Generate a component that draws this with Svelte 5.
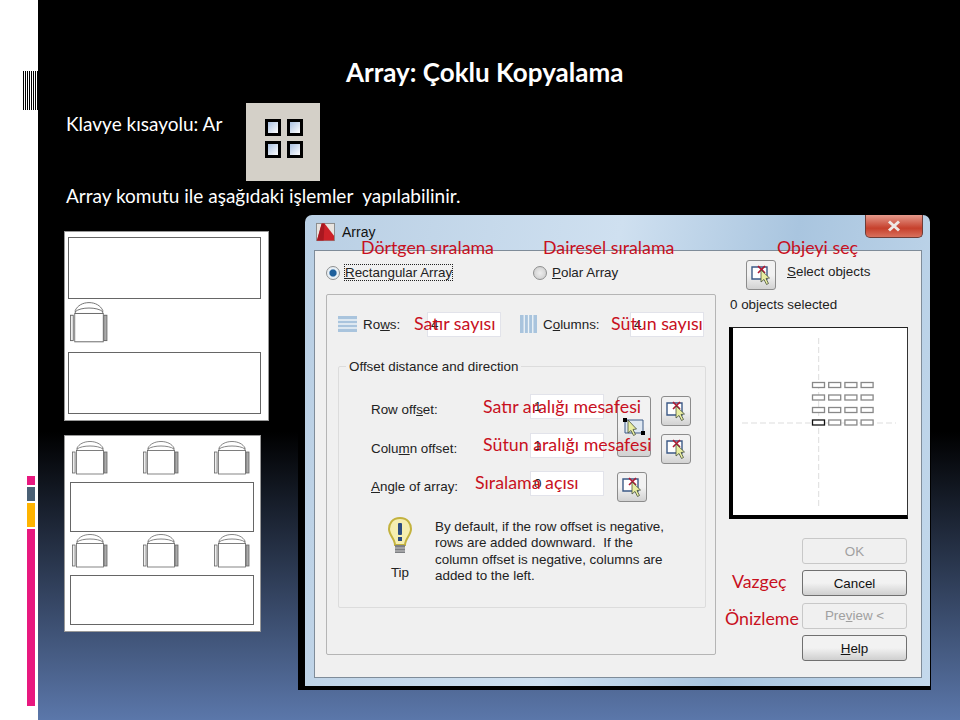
<script lang="ts">
  const barcode = [0, 2, 4, 6, 8, 10, 12, 14];
  const chairs = [0, 1, 2];
  const previewCols = [0, 1, 2, 3];
  const previewRows = [0, 1, 2, 3];

  const labels = [
    { text: 'Dörtgen sıralama', x: 63, y: 24 },
    { text: 'Dairesel sıralama', x: 245, y: 24 },
    { text: 'Objeyi seç', x: 479, y: 24 },
    { text: 'Satır sayısı', x: 116, y: 100 },
    { text: 'Sütun sayısı', x: 313, y: 100 },
    { text: 'Satır aralığı mesafesi', x: 185, y: 183 },
    { text: 'Sütun aralığı mesafesi', x: 185, y: 221 },
    { text: 'Sıralama açısı', x: 177, y: 259 },
    { text: 'Vazgeç', x: 434, y: 358 },
    { text: 'Önizleme', x: 427, y: 395 }
  ];
</script>

{#snippet chair(cls: string)}
  <svg class={cls} viewBox="0 0 36 34" preserveAspectRatio="none" aria-hidden="true">
    <g fill="#fff" stroke="#666" stroke-width="0.8">
      <path d="M5 7 C 7 3, 12 0.5, 18 0.5 C 24 0.5, 29 3, 31 7 L 31 10 L 5 10 Z" />
      <path d="M5 8 C 10 4, 26 4, 31 8" fill="none" />
      <rect x="4.5" y="9.5" width="27" height="23.5" />
      <rect x="0.5" y="11" width="2.6" height="21" fill="#eee" />
      <rect x="32" y="11" width="3" height="21" fill="#aaa" />
    </g>
  </svg>
{/snippet}

{#snippet pick()}
  <svg class="pick" viewBox="0 0 20 22" aria-hidden="true">
    <path d="M1 3 H16 V15 H1 Z" fill="#fff" stroke="#3c5a86" stroke-width="1.4" />
    <path d="M7 2 L14 9 M14 2 L7 9" stroke="#b01830" stroke-width="1.6" />
    <path d="M10 6 L10 18 L13 15.5 L15.5 20.5 L17.5 19.5 L15 14.5 L18.5 14 Z" fill="#e8eda0" stroke="#46513c" stroke-width="0.8" />
  </svg>
{/snippet}

<div class="page">
  <aside class="rail">
    <div class="barcode">
      {#each barcode as b (b)}<span></span>{/each}
    </div>
    <div class="blocks">
      <span class="pink small"></span>
      <span class="slate"></span>
      <span class="amber"></span>
      <span class="pink long"></span>
    </div>
  </aside>

  <main class="slide">
    <h1>Array: Çoklu Kopyalama</h1>

    <div class="shortcut">
      <p>Klavye kısayolu: Ar</p>
      <div class="tool">
        <span></span><span></span><span></span><span></span>
      </div>
    </div>

    <p class="intro">Array komutu ile aşağıdaki işlemler&nbsp; yapılabilinir.</p>

    <div class="content">
      <div class="plans">
        <div class="plan one">
          <div class="table"></div>
          {@render chair('seat-lg')}
          <div class="table"></div>
        </div>
        <div class="plan two">
          <div class="seats">
            {#each chairs as c (c)}{@render chair('seat')}{/each}
          </div>
          <div class="table"></div>
          <div class="seats">
            {#each chairs as c (c)}{@render chair('seat')}{/each}
          </div>
          <div class="table"></div>
        </div>
      </div>

      <div class="shot">
        <div class="window">
          <header class="titlebar">
            <svg class="cad" viewBox="0 0 20 20" aria-hidden="true">
              <rect x="0.5" y="1" width="19" height="18" fill="#e8e4e0" stroke="#8a8a8a" />
              <path d="M1 19 L6 1 L9 1 L19 14 L19 19 Z" fill="#cc2128" />
              <path d="M6 1 L9 1 L8 19 L1 19 Z" fill="#a81820" />
            </svg>
            <span>Array</span>
            <button class="close" type="button">
              <svg viewBox="0 0 16 12" aria-hidden="true"><path d="M3 1.5 L13 10.5 M13 1.5 L3 10.5" stroke="#eee8e4" stroke-width="3" /></svg>
            </button>
          </header>

          <div class="body">
            <div class="main-col">
              <div class="radios">
                <label class="radio on"><i></i><span class="focus"><u>R</u>ectangular Array</span></label>
                <label class="radio"><i></i><span><u>P</u>olar Array</span></label>
              </div>

              <section class="group">
                <div class="counts">
                  <svg class="mini" viewBox="0 0 19 18" aria-hidden="true">
                    <path d="M0 1 H19 V17 H0 Z" fill="#a9c4dd" />
                    <path d="M0 5 H19 M0 9 H19 M0 13 H19" stroke="#eef4f8" stroke-width="1.4" />
                  </svg>
                  <span class="rows-label">Ro<u>w</u>s:</span>
                  <span class="field count-a">4</span>
                  <svg class="mini" viewBox="0 0 18 19" aria-hidden="true">
                    <path d="M0 0 H18 V19 H0 Z" fill="#a9c4dd" />
                    <path d="M4.5 0 V19 M9 0 V19 M13.5 0 V19" stroke="#eef4f8" stroke-width="1.4" />
                  </svg>
                  <span class="cols-label">C<u>o</u>lumns:</span>
                  <span class="field count-b">4</span>
                </div>

                <fieldset class="offset">
                  <legend>Offset distance and direction</legend>
                  <div class="offset-grid">
                    <span class="off-label">Row off<u>s</u>et:</span>
                    <span class="field">1</span>
                    <button class="btn tall" type="button">
                      <svg viewBox="0 0 22 18" aria-hidden="true">
                        <path d="M2 2 H20 V15 H2 Z" fill="#dfe8f2" stroke="#3c5a86" />
                        <rect x="0" y="0" width="4" height="4" fill="#000" />
                        <rect x="18" y="13" width="4" height="4" fill="#000" />
                        <path d="M5 2 L5 15 L8 12.5 L10.5 17.5 L12.5 16.5 L10 11.5 L13.5 11 Z" fill="#e8eda0" stroke="#46513c" stroke-width="0.8" />
                      </svg>
                    </button>
                    <button class="btn far first" type="button">{@render pick()}</button>

                    <span class="off-label">Colu<u>m</u>n offset:</span>
                    <span class="field">1</span>
                    <button class="btn far" type="button">{@render pick()}</button>

                    <span class="off-label"><u>A</u>ngle of array:</span>
                    <span class="field">0</span>
                    <button class="btn" type="button">{@render pick()}</button>
                  </div>

                  <div class="tip">
                    <div class="tip-icon">
                      <svg viewBox="0 0 24 38" aria-hidden="true">
                        <path d="M12 1 C 4 1, 1 7, 1 12 C 1 18, 7 22, 7 28 H17 C 17 22, 23 18, 23 12 C 23 7, 20 1, 12 1 Z" fill="#f5eeb0" stroke="#c3b23e" stroke-width="2" />
                        <rect x="10" y="6" width="4" height="12" rx="1" fill="#2c4c80" />
                        <rect x="10" y="20" width="4" height="4" fill="#2c4c80" />
                        <rect x="7" y="28" width="10" height="8" fill="#7d7f82" />
                        <path d="M7 31 H17 M7 34 H17" stroke="#c8c8c8" />
                      </svg>
                      <span>Tip</span>
                    </div>
                    <p>By default, if the row offset is negative,<br />rows are added downward.&nbsp; If the<br />column offset is negative, columns are<br />added to the left.</p>
                  </div>
                </fieldset>
              </section>
            </div>

            <div class="side-col">
              <div class="select">
                <button class="btn" type="button">{@render pick()}</button>
                <span><u>S</u>elect objects</span>
              </div>
              <p class="selected">0 objects selected</p>
              <svg class="preview" viewBox="0 0 174 187" aria-hidden="true">
                <path d="M85.7 10 V178 M9 95 H163" stroke="#ddd" stroke-dasharray="6 3" fill="none" />
                {#each previewRows as r (r)}
                  {#each previewCols as c (c)}
                    <rect
                      x={79.5 + c * 16.2}
                      y={54.5 + r * 12.5}
                      width="12"
                      height="5"
                      fill="#fff"
                      stroke-width="1.3"
                      stroke={r === 3 && c === 0 ? '#111' : '#888'}
                    />
                  {/each}
                {/each}
              </svg>
              <div class="actions">
                <button class="push off" type="button">OK</button>
                <button class="push" type="button">Cancel</button>
                <button class="push off" type="button">Pre<u>v</u>iew &lt;</button>
                <button class="push" type="button"><u>H</u>elp</button>
              </div>
            </div>
          </div>
        </div>

        {#each labels as l (l.text)}
          <span class="note" style="left: {l.x}px; top: {l.y}px">{l.text}</span>
        {/each}
      </div>
    </div>
  </main>
</div>

<style>
  :global(body) {
    margin: 0;
    background: #fff;
  }

  .page {
    display: flex;
    width: 960px;
    height: 720px;
    overflow: hidden;
    font-family: Lato, 'Open Sans', sans-serif;
  }

  .rail {
    width: 38px;
    flex: none;
    padding-top: 71px;
    box-sizing: border-box;
    background: #fff;
  }

  .barcode {
    display: flex;
    justify-content: flex-end;
    gap: 1px;
    height: 39px;
  }

  .barcode span {
    width: 1px;
    background: #000;
  }

  .blocks {
    display: flex;
    flex-direction: column;
    gap: 2px;
    width: 8px;
    margin: 366px 0 0 27px;
  }

  .pink {
    background: #e8187f;
  }

  .small {
    height: 9px;
  }

  .slate {
    height: 14px;
    background: #4a6075;
  }

  .amber {
    height: 24px;
    background: #ffb400;
  }

  .long {
    height: 177px;
  }

  .slide {
    flex: 1;
    padding: 56px 0 0 28px;
    color: #fff;
    background: linear-gradient(#000 0, #000 60%, #5b77aa 100%);
  }

  h1 {
    margin: 0 0 0 280px;
    font-size: 26px;
    line-height: 32px;
    font-weight: 700;
  }

  .shortcut {
    display: flex;
    align-items: flex-start;
    margin-top: 15px;
  }

  .shortcut p,
  .intro {
    margin: 0;
    font-size: 19px;
    line-height: 22px;
  }

  .shortcut p {
    width: 180px;
    flex: none;
    margin-top: 10px;
    white-space: nowrap;
  }

  .tool {
    display: grid;
    grid-template-columns: repeat(2, 16px);
    grid-auto-rows: 17px;
    gap: 5px 6px;
    width: 74px;
    height: 78px;
    padding: 16px 0 0 19px;
    box-sizing: border-box;
    background: #d4d0c8;
  }

  .tool span {
    border: 3px solid #000;
    background: linear-gradient(135deg, #a9c0e0, #fff);
  }

  .intro {
    margin-top: 4px;
  }

  .content {
    display: flex;
    margin: 6px 0 0 -2px;
  }

  .plans {
    width: 234px;
    padding-top: 18px;
    flex: none;
  }

  .plan {
    box-sizing: border-box;
    background: #fff;
    border: 1px solid #999;
  }

  .table {
    border: 1px solid #666;
  }

  .plan.one {
    width: 205px;
    height: 190px;
    padding: 5px 7px 7px 3px;
  }

  .plan.one .table {
    height: 60px;
  }

  .seat-lg {
    display: block;
    width: 38px;
    height: 41px;
    margin: 3px 0 9px 2px;
  }

  .plan.two {
    width: 197px;
    height: 197px;
    margin-top: 14px;
    padding: 5px 6px 8px 5px;
  }

  .plan.two .table {
    height: 48px;
  }

  .seats {
    display: flex;
    justify-content: space-between;
    padding: 0 4px 0 2px;
    height: 34px;
    margin-bottom: 7px;
  }

  .plan.two .table + .seats {
    margin-top: 2px;
  }

  .seat {
    width: 36px;
    height: 34px;
  }

  .shot {
    position: relative;
    width: 633px;
    height: 477px;
    padding: 2px 1px 4px 7px;
    box-sizing: border-box;
    background: #000;
  }

  .window {
    height: 471px;
    border-radius: 7px 7px 0 0;
    background: linear-gradient(100deg, #b9cfe4, #cfe0f0 45%, #a9c5df 70%, #c4d9ec);
  }

  .titlebar {
    display: flex;
    align-items: flex-start;
    gap: 7px;
    height: 35px;
    padding-left: 11px;
    font: 14px 'Liberation Sans', sans-serif;
    color: #111;
  }

  .titlebar span {
    margin-top: 9px;
  }

  .cad {
    width: 19px;
    height: 20px;
    margin-top: 7px;
  }

  .close {
    width: 58px;
    height: 23px;
    padding: 0;
    margin-left: auto;
    margin-right: 7px;
    border: 1px solid #6d3d38;
    border-top: 0;
    border-radius: 0 0 5px 5px;
    background: linear-gradient(#e59a8c, #c6402c 60%, #d8705c);
  }

  .close svg {
    display: block;
    width: 16px;
    height: 12px;
    margin: 4px auto;
  }

  .body {
    display: flex;
    gap: 14px;
    height: 428px;
    margin: 0 8px 0 9px;
    padding-left: 11px;
    box-sizing: border-box;
    border: 1px solid #7f8c99;
    background: #f0f0f0;
    font: 13.4px 'Liberation Sans', sans-serif;
    color: #222;
  }

  .main-col {
    width: 390px;
    flex: none;
  }

  .radios {
    display: flex;
    height: 43px;
    align-items: center;
  }

  .radio {
    display: flex;
    align-items: center;
    gap: 5px;
  }

  .radio.on {
    width: 207px;
  }

  .radio i {
    width: 12px;
    height: 12px;
    border: 1px solid #8e8f8f;
    border-radius: 50%;
    background: radial-gradient(#eee, #c8c8c8);
  }

  .radio.on i {
    background: radial-gradient(#1d5f9c 0 35%, #e8f0f6 50%);
  }

  .focus {
    outline: 1px dotted #222;
  }

  .group {
    box-sizing: border-box;
    height: 361px;
    padding: 16px 9px 0 11px;
    border: 1px solid #b5b5b5;
    border-radius: 2px;
  }

  .counts {
    display: flex;
    align-items: center;
    height: 26px;
    margin-bottom: 22px;
  }

  .mini {
    width: 19px;
    height: 18px;
    flex: none;
  }

  .rows-label {
    margin-left: 6px;
    width: 64px;
  }

  .cols-label {
    margin-left: 5px;
    width: 87px;
  }

  .field {
    display: block;
    box-sizing: border-box;
    height: 25px;
    line-height: 23px;
    padding-left: 3px;
    background: #fff;
    border: 1px solid #e2e3ea;
  }

  .count-a,
  .count-b {
    width: 74px;
  }

  .count-a {
    margin-right: 18px;
  }

  .offset {
    margin: 0;
    height: 249px;
    box-sizing: border-box;
    padding: 20px 0 0 32px;
    border: 1px solid #dcdcdc;
    border-radius: 2px;
  }

  legend {
    padding: 0 3px;
    margin-left: -25px;
    font-size: 13.4px;
  }

  .offset-grid {
    display: grid;
    grid-template-columns: 146px 74px 34px 30px;
    grid-template-rows: 39px 38px 30px;
    column-gap: 13px;
    align-items: start;
    justify-content: start;
  }

  .off-label {
    padding-top: 8px;
    margin-right: -13px;
  }

  .btn {
    display: flex;
    align-items: center;
    justify-content: center;
    width: 30px;
    height: 30px;
    padding: 0;
    border: 1px solid #8c8c8c;
    border-radius: 3px;
    background: linear-gradient(#f2f2f2 50%, #d2d2d2);
  }

  .offset-grid .btn {
    margin-top: 1px;
  }

  .offset-grid .far {
    grid-column: 4;
    margin-left: -3px;
  }

  .offset-grid .far.first {
    margin-top: 2px;
  }

  .offset-grid .tall {
    grid-row: span 2;
    width: 34px;
    height: 61px;
    margin-top: 2px;
  }

  .tall svg {
    width: 22px;
    height: 18px;
  }

  .pick {
    width: 20px;
    height: 22px;
  }

  .tip {
    display: flex;
    margin-top: 16px;
    gap: 23px;
    padding-left: 17px;
  }

  .tip-icon {
    display: flex;
    flex-direction: column;
    align-items: center;
    width: 24px;
    gap: 10px;
  }

  .tip-icon svg {
    width: 24px;
    height: 38px;
  }

  .tip p {
    margin: 2px 0 0;
    font-size: 13.4px;
    line-height: 16.3px;
    white-space: nowrap;
  }

  .side-col {
    display: flex;
    flex-direction: column;
    width: 178px;
  }

  .select {
    display: flex;
    align-items: flex-start;
    gap: 11px;
    margin: 9px 0 0 16px;
    height: 30px;
  }

  .select span {
    margin-top: 4px;
  }

  .selected {
    margin: 7px 0 0;
    line-height: 16px;
  }

  .preview {
    display: block;
    width: 174px;
    height: 187px;
    margin: 14px 0 0 -1px;
    background: #fff;
    border-left: 4px solid #000;
    border-bottom: 4px solid #000;
    border-top: 1px solid #222;
    border-right: 1px solid #333;
    box-sizing: content-box;
  }

  .actions {
    display: grid;
    grid-template-rows: repeat(4, 26px);
    row-gap: 6.4px;
    margin: 19px 0 0 72px;
    width: 105px;
  }

  .push {
    padding: 0;
    font: 13.4px 'Liberation Sans', sans-serif;
    color: #111;
    border: 1px solid #707070;
    border-radius: 3px;
    background: linear-gradient(#f2f2f2 50%, #cfcfcf);
  }

  .push.off {
    color: #a0a0a0;
    border-color: #c8c8c8;
    background: #f0f0f0;
  }

  .note {
    position: absolute;
    font-size: 17.8px;
    line-height: 20px;
    white-space: nowrap;
    color: #c8101e;
  }
</style>
